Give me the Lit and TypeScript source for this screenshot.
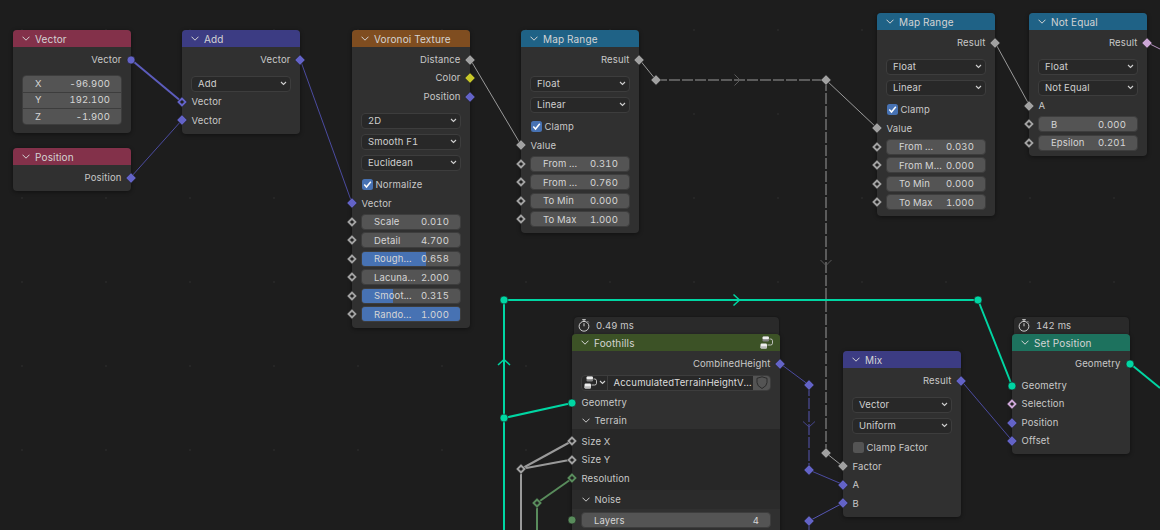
import { LitElement, html, css, svg } from "lit";
import { customElement } from "lit/decorators.js";

const BLUE = "#6363c7", GRAY = "#a1a1a1", YEL = "#c7c729", GEO = "#00d6a3", PINK = "#cca6d6", INT = "#598c5c";
type Shape = "c" | "d" | "h";
type Sock = [string, Shape];
const V: Sock = [BLUE, "d"], VH: Sock = [BLUE, "h"], F: Sock = [GRAY, "d"], FH: Sock = [GRAY, "h"];

type Row =
  | { k: "out" | "in"; t: string; s: Sock; cls?: string }
  | { k: "drops"; items: string[]; cls?: string }
  | { k: "check"; t: string; on: boolean }
  | { k: "field"; t: string; v: string; s?: Sock; fill?: number }
  | { k: "vec"; items: [string, string][] }
  | { k: "tree" }
  | { k: "panel"; t: string; cls?: string }
  | { k: "sub"; rows: Row[] };

interface NodeD { x: number; y: number; w: number; title: string; color: string; rows: Row[]; time?: string; icon?: boolean; }

const mapRows = (a: string, b: string, fa: string, fb: string): Row[] => [
  { k: "out", t: "Result", s: F },
  { k: "drops", items: ["Float", "Linear"] },
  { k: "check", t: "Clamp", on: true },
  { k: "in", t: "Value", s: F },
  { k: "field", t: a, v: fa, s: FH },
  { k: "field", t: b, v: fb, s: FH },
  { k: "field", t: "To Min", v: "0.000", s: FH },
  { k: "field", t: "To Max", v: "1.000", s: FH },
];

const NODES: NodeD[] = [
  { x: 13, y: 30, w: 118, title: "Vector", color: "#83314a", rows: [
    { k: "out", t: "Vector", s: [BLUE, "c"] },
    { k: "vec", items: [["X", "-96.900"], ["Y", "192.100"], ["Z", "-1.900"]] },
  ] },
  { x: 13, y: 148, w: 118, title: "Position", color: "#83314a", rows: [{ k: "out", t: "Position", s: V }] },
  { x: 182, y: 30, w: 118, title: "Add", color: "#3c3c83", rows: [
    { k: "out", t: "Vector", s: V },
    { k: "drops", items: ["Add"], cls: "tight" },
    { k: "in", t: "Vector", s: VH },
    { k: "in", t: "Vector", s: V },
  ] },
  { x: 352, y: 30, w: 118, title: "Voronoi Texture", color: "#7f4d20", rows: [
    { k: "out", t: "Distance", s: F },
    { k: "out", t: "Color", s: [YEL, "d"] },
    { k: "out", t: "Position", s: V },
    { k: "drops", items: ["2D", "Smooth F1", "Euclidean"] },
    { k: "check", t: "Normalize", on: true },
    { k: "in", t: "Vector", s: V },
    { k: "field", t: "Scale", v: "0.010", s: FH },
    { k: "field", t: "Detail", v: "4.700", s: FH },
    { k: "field", t: "Rough...", v: "0.658", s: FH, fill: 65.8 },
    { k: "field", t: "Lacuna...", v: "2.000", s: FH },
    { k: "field", t: "Smoot...", v: "0.315", s: FH, fill: 31.5 },
    { k: "field", t: "Rando...", v: "1.000", s: FH, fill: 100 },
  ] },
  { x: 521, y: 30, w: 118, title: "Map Range", color: "#1f6286", rows: mapRows("From ...", "From ...", "0.310", "0.760") },
  { x: 877, y: 13, w: 118, title: "Map Range", color: "#1f6286", rows: mapRows("From ...", "From M...", "0.030", "0.000") },
  { x: 1029, y: 13, w: 118, title: "Not Equal", color: "#1f6286", rows: [
    { k: "out", t: "Result", s: [PINK, "d"] },
    { k: "drops", items: ["Float", "Not Equal"], cls: "tight" },
    { k: "in", t: "A", s: F },
    { k: "field", t: "B", v: "0.000", s: FH },
    { k: "field", t: "Epsilon", v: "0.201", s: FH },
  ] },
  { x: 843, y: 351, w: 118, title: "Mix", color: "#3c3c83", rows: [
    { k: "out", t: "Result", s: V },
    { k: "drops", items: ["Vector", "Uniform"] },
    { k: "check", t: "Clamp Factor", on: false },
    { k: "in", t: "Factor", s: F },
    { k: "in", t: "A", s: V },
    { k: "in", t: "B", s: V },
  ] },
  { x: 1012, y: 334, w: 118, title: "Set Position", color: "#1d725e", time: "142 ms", rows: [
    { k: "out", t: "Geometry", s: [GEO, "c"], cls: "after" },
    { k: "in", t: "Geometry", s: [GEO, "c"] },
    { k: "in", t: "Selection", s: [PINK, "h"] },
    { k: "in", t: "Position", s: V },
    { k: "in", t: "Offset", s: V },
  ] },
  { x: 572, y: 334, w: 208, title: "Foothills", color: "#3c5226", time: "0.49 ms", icon: true, rows: [
    { k: "out", t: "CombinedHeight", s: V },
    { k: "tree" },
    { k: "in", t: "Geometry", s: [GEO, "c"] },
    { k: "panel", t: "Terrain" },
    { k: "sub", rows: [
      { k: "in", t: "Size X", s: FH },
      { k: "in", t: "Size Y", s: FH },
      { k: "in", t: "Resolution", s: [INT, "h"] },
    ] },
    { k: "panel", t: "Noise", cls: "dim" },
    { k: "field", t: "Layers", v: "4", s: [INT, "c"] },
  ] },
];

// [x1, y1, x2, y2, color, width, dashed]
type W = [number, number, number, number, string, number, boolean?];
const WG = "#9a9a9a";
const WIRES: W[] = [
  [131, 59.5, 182, 102, "#5c5cbc", 2],
  [131, 177, 182, 120, "#4b4ba0", 1],
  [300, 59, 352, 203, "#4b4ba0", 1],
  [470, 59, 521, 145, WG, 1],
  [639, 59, 656, 80, WG, 1],
  [656, 80, 826, 80, WG, 1, true],
  [826, 80, 877, 128, WG, 1],
  [826, 80, 826, 453, WG, 1, true],
  [826, 453, 843, 466.5, WG, 1],
  [995, 42.5, 1029, 104.5, WG, 1],
  [1147, 42.5, 1160, 49, "#b592c0", 1],
  [504, 300, 978, 300, GEO, 2],
  [978, 300, 1012, 385.5, GEO, 2],
  [504, 300, 504, 530, GEO, 2],
  [504, 418, 572, 403, GEO, 2],
  [521, 469, 572, 441, WG, 2],
  [521, 469, 572, 459.5, WG, 2],
  [521, 469, 521, 530, WG, 2],
  [537, 503, 572, 478.5, INT, 2],
  [537, 503, 537, 530, INT, 2],
  [780, 363.5, 809, 385, "#4b4ba0", 1],
  [809, 385, 809, 470, "#5656b4", 1, true],
  [809, 470, 843, 484.5, "#4b4ba0", 1],
  [843, 503, 809, 521, "#5656b4", 1],
  [809, 521, 809, 530, "#5656b4", 1],
  [961, 380.5, 1012, 440.5, "#4b4ba0", 1],
  [1130, 363.5, 1160, 388, GEO, 2],
];

// chevrons: points
const CHEVS: [string, string, number][] = [
  ["734.5,74.5 740,80 734.5,85.5", "#5a5a5a", 1],
  ["820.5,260 826,265.5 831.5,260", "#5a5a5a", 1],
  ["803,421.5 809,427 815,421.5", "#45458c", 1],
  ["733.5,294.5 739.5,300 733.5,305.5", GEO, 1.5],
  ["498,365 504,359.5 510,365", GEO, 1.5],
];

const REROUTES: [number, number, Sock][] = [
  [656, 80, F], [826, 80, F], [826, 453, F],
  [504, 300, [GEO, "c"]], [978, 300, [GEO, "c"]], [504, 418, [GEO, "c"]],
  [521, 469, FH], [537, 503, [INT, "h"]],
  [809, 385, V], [809, 470, V], [809, 521, V],
];

function sockShape(cx: number, cy: number, s: Sock) {
  const [c, sh] = s;
  if (sh === "c") return svg`<circle cx=${cx} cy=${cy} r="4" fill=${c} stroke="#1c1c1c" stroke-width=".6"></circle>`;
  const r = 5.2;
  const pts = `${cx},${cy - r} ${cx + r},${cy} ${cx},${cy + r} ${cx - r},${cy}`;
  return svg`<polygon points=${pts} fill=${c} stroke="#1c1c1c" stroke-width=".6"></polygon>${
    sh === "h" ? svg`<rect x=${cx - 1.5} y=${cy - 1.5} width="3" height="3" fill="#222" transform="rotate(45 ${cx} ${cy})"></rect>` : null
  }`;
}

const chevDown = html`<svg class="chev" width="8" height="5" viewBox="0 0 8 5"><path d="M.5.7 4 4.2 7.500.7" fill="none" stroke="currentColor" stroke-width="1"/></svg>`;
const ddChev = html`<svg class="ddchev" width="7" height="5" viewBox="0 0 7 5"><path d="M1 1 3.500 3.500 6 1" fill="none" stroke="#d0d0d0" stroke-width="1.100"/></svg>`;
const treeIcon = html`<svg width="13" height="13" viewBox="0 0 13 13"><rect x="2.500" y=".5" width="6.500" height="5" rx="1.200" fill="#7e7e7e"/><rect x="2.500" y=".5" width="6.500" height="2.800" rx="1.200" fill="#eee"/><rect x=".5" y="7.500" width="6.500" height="5" rx="1.200" fill="#eee"/><rect x=".5" y="10.300" width="6.500" height="2.200" rx="1" fill="#bbb"/><path d="M9.500 3h1.200q1.800 0 1.800 1.800v2.400q0 1.800-1.800 1.800H7.500" fill="none" stroke="#ccc" stroke-width=".9"/></svg>`;
const shield = html`<svg width="12" height="13" viewBox="0 0 12 13"><path d="M6 .8 11 2.300V6.500q0 3.500-5 6-5-2.500-5-6V2.300Z" fill="none" stroke="#2a2a2a" stroke-width="1"/></svg>`;
const timer = html`<svg width="12" height="13" viewBox="0 0 12 13"><circle cx="6" cy="7.300" r="4.900" fill="none" stroke="#d0d0d0" stroke-width="1"/><path d="M4.200.7h3.600M6 .7v1.700M6 7.300 6 4.200M9.700 2.300l1 1" fill="none" stroke="#d0d0d0" stroke-width="1"/></svg>`;
const check = html`<svg width="11" height="11" viewBox="0 0 11 11"><path d="M2.300 5.600 4.500 8 8.800 2.700" fill="none" stroke="#fff" stroke-width="1.500"/></svg>`;

@customElement("app-root")
export class AppRoot extends LitElement {
  static styles = css`
    :host { display: block; width: 1160px; height: 530px; }
    .canvas {
      position: relative; width: 1160px; height: 530px; overflow: hidden; background-color: #1d1d1d;
      background-image: radial-gradient(circle at 1px 1px, #262626 1px, transparent 1.500px);
      background-size: 84px 84px; background-position: 21px 29px;
      font: 9.500px/1 Inter, "Liberation Sans", sans-serif; color: #c8c8c8; letter-spacing: .15px;
      font-variant-numeric: tabular-nums;
    }
    .wires { position: absolute; inset: 0; }
    .node { position: absolute; background: #303030; border-radius: 4px; box-shadow: 0 1px 4px rgba(0,0,0,.45); }
    .head { height: 17px; border-radius: 4px 4px 0 0; display: flex; align-items: center; color: #d4d4d4; padding-left: 9px; gap: 5px; font-size: 10px; }
    .head .chev { color: #d4d4d4; flex: none; }
    .head .icon { margin-left: auto; margin-right: 7px; display: flex; }
    .body { padding: 3.250px 0 4px; }
    .row { position: relative; height: 18.500px; display: flex; align-items: center; padding: 0 9.500px; box-sizing: border-box; }
    .row.out { justify-content: flex-end; }
    .row.after { margin-bottom: 3.500px; }
    .sock { position: absolute; width: 14px; height: 14px; top: 50%; margin-top: -7px; display: block; }
    .sock.l { left: -7px; }
    .sock.r { right: -7px; }
    .drops { margin: 4.500px 0 2.250px; }
    .drops.tight { margin-bottom: -1.750px; }
    .ddrow { height: 21px; display: flex; align-items: center; padding: 0 9px; }
    .dd { flex: 1; height: 16px; box-sizing: border-box; background: #282828; border: 1px solid #3d3d3d; border-radius: 4px; display: flex; align-items: center; justify-content: space-between; padding: 0 3px 0 6px; color: #d0d0d0; }
    .cb { width: 11px; height: 11px; border-radius: 2.500px; margin-right: 3px; background: #545454; display: flex; }
    .cb.on { background: #4772b3; }
    .frow { position: relative; height: 18.500px; display: flex; align-items: center; padding: 0 9px; }
    .field { position: relative; flex: 1; height: 16px; box-sizing: border-box; background: #545454; border: 1px solid #3d3d3d; border-radius: 4px; overflow: hidden; display: flex; align-items: center; justify-content: space-between; padding: 0 11px 0 12px; color: #d6d6d6; }
    .fill { position: absolute; left: 0; top: 0; bottom: 0; background: #4772b3; }
    .field span { position: relative; }
    .vec { margin: 6.500px 9px 3.500px; border: 1px solid #3d3d3d; border-radius: 4px; overflow: hidden; }
    .vrow { height: 15.330px; box-sizing: border-box; background: #545454; display: flex; align-items: center; justify-content: space-between; padding: 0 11px 0 12px; color: #d6d6d6; }
    .vrow + .vrow { border-top: 1px solid #3d3d3d; height: 16.330px; }
    .tree { display: flex; height: 16px; margin: 2px 9px 3px; border-radius: 4px; border: 1px solid #3d3d3d; box-sizing: border-box; overflow: hidden; background: #282828; color: #dcdcdc; }
    .tree .pick { width: 25.500px; display: flex; align-items: center; gap: 2px; padding-left: 2px; box-sizing: border-box; border-right: 1px solid #3d3d3d; }
    .tree .name { flex: 1; display: flex; align-items: center; padding-left: 6px; white-space: nowrap; overflow: hidden; }
    .tree .sh { width: 17px; background: #545454; display: flex; align-items: center; justify-content: center; }
    .panel { height: 17px; display: flex; align-items: center; gap: 5px; padding-left: 9.500px; }
    .panel .chev { flex: none; }
    .panel.dim { background: #2b2b2b; height: 19px; margin-bottom: 2px; }
    .sub { background: #272727; padding: 2.750px 0 2.500px; }
    .timing { position: absolute; height: 17px; background: #2a2a2a; border-radius: 4px 4px 0 0; display: flex; align-items: center; gap: 6px; padding-left: 4px; box-sizing: border-box; box-shadow: 0 0 2px rgba(0,0,0,.5); }
  `;

  private sock(s: Sock, side: "l" | "r") {
    return html`<svg class="sock ${side}" viewBox="0 0 14 14">${sockShape(7, 7, s)}</svg>`;
  }

  private row(r: Row): unknown {
    switch (r.k) {
      case "out":
        return html`<div class="row out ${r.cls ?? ""}">${r.t}${this.sock(r.s, "r")}</div>`;
      case "in":
        return html`<div class="row">${r.t}${this.sock(r.s, "l")}</div>`;
      case "drops":
        return html`<div class="drops ${r.cls ?? ""}">${r.items.map((t) => html`<div class="ddrow"><div class="dd"><span>${t}</span>${ddChev}</div></div>`)}</div>`;
      case "check":
        return html`<div class="row"><span class="cb ${r.on ? "on" : ""}">${r.on ? check : null}</span>${r.t}</div>`;
      case "field":
        return html`<div class="frow">${r.s ? this.sock(r.s, "l") : null}<div class="field">${r.fill ? html`<div class="fill" style="width:${r.fill}%"></div>` : null}<span>${r.t}</span><span>${r.v}</span></div></div>`;
      case "vec":
        return html`<div class="vec">${r.items.map(([a, b]) => html`<div class="vrow"><span>${a}</span><span>${b}</span></div>`)}</div>`;
      case "tree":
        return html`<div class="tree"><div class="pick">${treeIcon}${ddChev}</div><div class="name">AccumulatedTerrainHeightV...</div><div class="sh">${shield}</div></div>`;
      case "panel":
        return html`<div class="panel ${r.cls ?? ""}">${chevDown}<span>${r.t}</span></div>`;
      case "sub":
        return html`<div class="sub">${r.rows.map((x) => this.row(x))}</div>`;
    }
  }

  render() {
    return html`<div class="canvas">
      <svg class="wires" width="1160" height="530" viewBox="0 0 1160 530">
        ${WIRES.map(([a, b, c, d, col, w, dash]) => svg`<line x1=${a} y1=${b} x2=${c} y2=${d} stroke=${col} stroke-width=${w} stroke-dasharray=${dash ? "11 2" : "none"}></line>`)}
        ${CHEVS.map(([p, c, w]) => svg`<polyline points=${p} fill="none" stroke=${c} stroke-width=${w}></polyline>`)}
        ${REROUTES.map(([x, y, s]) => sockShape(x, y, s))}
      </svg>
      ${NODES.map((n) => html`
        ${n.time ? html`<div class="timing" style="left:${n.x + 2}px;top:${n.y - 17}px;width:${n.w - 3}px">${timer}<span>${n.time}</span></div>` : null}
        <div class="node" style="left:${n.x}px;top:${n.y}px;width:${n.w}px">
          <div class="head" style="background:${n.color}">${chevDown}<span>${n.title}</span>${n.icon ? html`<span class="icon">${treeIcon}</span>` : null}</div>
          <div class="body">${n.rows.map((r) => this.row(r))}</div>
        </div>`)}
    </div>`;
  }
}
